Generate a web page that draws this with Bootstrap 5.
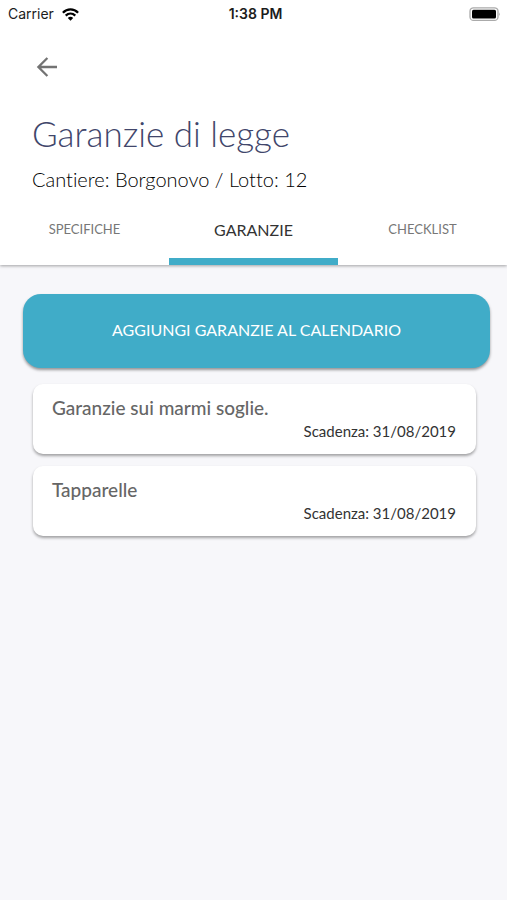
<!DOCTYPE html>
<html lang="it">
<head>
<meta charset="utf-8">
<meta name="viewport" content="width=device-width, initial-scale=1">
<title>Garanzie di legge</title>
<link rel="stylesheet" href="https://cdn.jsdelivr.net/npm/bootstrap@5.3.0/dist/css/bootstrap.min.css">
<style>
body { font-family: Lato, "Open Sans", sans-serif; font-variant-ligatures: none; background: #f7f7fa; color: #222; }
.app-header { background: #fff; box-shadow: 0 1px 3px rgba(0,0,0,.35); }
.status-bar { font: 14px/28px Inter, sans-serif; height: 28px; padding: 0 4px 0 8px; color: #1c1c1c; }
.status-time { font-weight: 600; }
.back-btn { margin: 15px 0 0 21px; color: #737373; line-height: 0; }
.heading-block { padding: 18px 32px 0; }
.page-title { font-size: 35px; line-height: 48px; font-weight: 300; color: #41466b; }
.site-line { font-size: 20px; line-height: 28px; font-weight: 300; margin-top: 8px; color: #000; }
.tabs-row .nav-link { height: 72px; padding: 8px 0 0; border: 0; border-bottom: 7px solid transparent; border-radius: 0; font-size: 13px; color: #777; }
.tabs-row .nav-link.active { font-size: 16px; color: #333; border-bottom-color: #40acc8; background: none; }
.content-area { padding: 29px 17px 24px 23px; }
.calendar-btn { height: 74px; padding: 0 12px 2px; border: 0; border-radius: 18px; background: #40acc8; color: #fff; font-size: 16px; box-shadow: 0 2px 3px rgba(0,0,0,.4); }
.calendar-btn:hover { background: #389bb5; color: #fff; }
.warranty-list { margin: 16px 14px 0 10px; gap: 12px; }
.warranty { border: 0; border-radius: 10px; padding: 12px 20px 11px 19px; box-shadow: 0 2px 3px rgba(0,0,0,.35); }
.warranty-name { font-size: 19px; line-height: 24px; color: #666; }
.warranty-date { font-size: 15px; line-height: 23px; color: #333; }
</style>
<script src="https://cdn.jsdelivr.net/npm/bootstrap@5.3.0/dist/js/bootstrap.bundle.min.js"></script>
</head>
<body>
<header class="app-header">
  <div class="status-bar row gx-0 align-items-center">
    <div class="col d-flex align-items-center gap-2">
      <span>Carrier</span>
      <svg width="17" height="13" viewBox="0 0 17 13" aria-hidden="true"><g fill="none" stroke="#000" stroke-width="2.3"><path d="M.9 4.7C5.2.3 11.8.3 16.1 4.7"/><path d="M3.7 7.7C6.5 5 10.5 5 13.3 7.7"/></g><path d="M5.8 9.9C7.3 8.4 9.7 8.4 11.2 9.9L8.5 12.7Z"/></svg>
    </div>
    <div class="col-auto status-time">1:38 PM</div>
    <div class="col d-flex justify-content-end">
      <svg width="34" height="15" viewBox="0 0 34 15" aria-label="Batteria carica"><rect x="1" y=".8" width="28" height="12.6" rx="3.5" fill="#fff" stroke="#aaa" stroke-width="1.3"/><rect x="3" y="2.8" width="24" height="8.6" rx="1.5"/><path d="M30.3 5.2Q31.7 7.1 30.3 9Z" fill="#999"/></svg>
    </div>
  </div>
  <button type="button" class="btn back-btn p-2" aria-label="Indietro">
    <svg width="30" height="30" viewBox="0 0 30 30" fill="none" stroke="currentColor" stroke-width="2.3"><path d="M27 15H9M17.4 6L8.4 15L17.4 24"/></svg>
  </button>
  <div class="heading-block">
    <h1 class="page-title mb-0">Garanzie di legge</h1>
    <p class="site-line mb-0">Cantiere: Borgonovo / Lotto: 12</p>
  </div>
  <nav class="nav row gx-0 tabs-row" aria-label="Sezioni">
    <a class="nav-link col d-flex align-items-center justify-content-center" href="#specifiche">SPECIFICHE</a>
    <a class="nav-link col d-flex align-items-center justify-content-center active" aria-current="page" href="#garanzie">GARANZIE</a>
    <a class="nav-link col d-flex align-items-center justify-content-center" href="#checklist">CHECKLIST</a>
  </nav>
</header>
<main class="content-area" id="garanzie">
  <button type="button" class="btn calendar-btn w-100">AGGIUNGI GARANZIE AL CALENDARIO</button>
  <div class="warranty-list d-flex flex-column">
    <article class="card warranty">
      <h2 class="warranty-name mb-0">Garanzie sui marmi soglie.</h2>
      <p class="warranty-date mb-0 text-end">Scadenza: 31/08/2019</p>
    </article>
    <article class="card warranty">
      <h2 class="warranty-name mb-0">Tapparelle</h2>
      <p class="warranty-date mb-0 text-end">Scadenza: 31/08/2019</p>
    </article>
  </div>
</main>
</body>
</html>
